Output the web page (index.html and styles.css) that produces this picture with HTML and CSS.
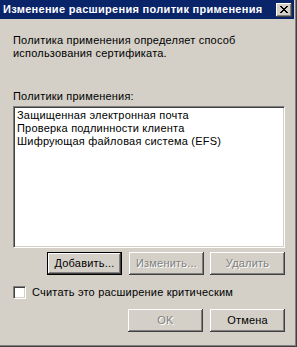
FILE: index.html
```html
<!DOCTYPE html>
<html lang="ru">
<head>
<meta charset="utf-8">
<link rel="stylesheet" href="styles.css">
</head>
<body>
<div class="window">
  <div class="titlebar">
    <span class="title">Изменение расширения политик применения</span>
    <span class="close">
      <svg width="8" height="7" viewBox="0 0 8 7" shape-rendering="crispEdges"><path fill="#000" d="M0 0h2v1H0zM6 0h2v1H6zM1 1h2v1H1zM5 1h2v1H5zM2 2h4v1H2zM3 3h2v1H3zM2 4h4v1H2zM1 5h2v1H1zM5 5h2v1H5zM0 6h2v1H0zM6 6h2v1H6z"/></svg>
    </span>
  </div>
  <div class="content">
    <p class="desc">Политика применения определяет способ<br>использования сертификата.</p>
    <p class="label">Политики применения:</p>
    <div class="list">
      <div class="item">Защищенная электронная почта</div>
      <div class="item">Проверка подлинности клиента</div>
      <div class="item">Шифрующая файловая система (EFS)</div>
    </div>
    <div class="btnrow">
      <span class="btn default">Добавить...</span>
      <span class="btn disabled">Изменить...</span>
      <span class="btn disabled">Удалить</span>
    </div>
    <label class="check"><span class="box"></span><span>Считать это расширение критическим</span></label>
    <div class="btnrow bottom">
      <span class="btn disabled">OK</span>
      <span class="btn">Отмена</span>
    </div>
  </div>
</div>
</body>
</html>
```

FILE: styles.css
```css
html, body {
  margin: 0;
  padding: 0;
  background: #d4d0c8;
}
body {
  font-family: "Liberation Sans", Arial, sans-serif;
  font-size: 11px;
  line-height: 13px;
  letter-spacing: 0.2px;
  color: #000;
}
.window {
  width: 297px;
  height: 347px;
  box-sizing: border-box;
  background: #d4d0c8;
  padding: 0 3px 3px 0;
  box-shadow: inset -1px -1px #404040, inset -2px -2px #808080;
  display: flex;
  flex-direction: column;
}
.titlebar {
  height: 19px;
  background: #0a246a;
  display: flex;
  align-items: center;
  justify-content: space-between;
  padding: 0 2px 0 3px;
}
.title {
  color: #fff;
  font-weight: bold;
  font-size: 11px;
  letter-spacing: 0.3px;
  white-space: nowrap;
}
.close {
  width: 16px;
  height: 14px;
  box-sizing: border-box;
  background: #d4d0c8;
  box-shadow: inset -1px -1px #404040, inset 1px 1px #fff, inset -2px -2px #808080;
  display: flex;
  align-items: center;
  justify-content: center;
}
.close svg { display: block; }
.content {
  padding: 0 9px 0 13px;
  display: flex;
  flex-direction: column;
}
.desc {
  margin: 15px 0 0;
}
.label {
  margin: 30px 0 0;
}
.list {
  margin-top: 3px;
  height: 142px;
  box-sizing: border-box;
  background: #fff;
  border-top: 1px solid #808080;
  border-left: 1px solid #808080;
  border-right: 1px solid #fff;
  border-bottom: 1px solid #fff;
  box-shadow: inset 1px 1px #404040, inset -1px -1px #d4d0c8;
  padding: 2px 3px;
}
.item {
  height: 13px;
  white-space: nowrap;
}
.btnrow {
  margin-top: 4px;
  display: flex;
  justify-content: flex-end;
  gap: 6px;
}
.btnrow.bottom {
  margin-top: 10px;
  gap: 7px;
}
.btn {
  width: 75px;
  height: 23px;
  box-sizing: border-box;
  background: #d4d0c8;
  box-shadow: inset -1px -1px #404040, inset 1px 1px #fff, inset -2px -2px #808080;
  display: flex;
  align-items: center;
  justify-content: center;
}
.btn.default {
  border: 1px solid #000;
  margin-right: 1px;
}
.btn.disabled {
  color: #808080;
  text-shadow: 1px 1px #fff;
}
.check {
  margin-top: 11px;
  display: flex;
  align-items: center;
  gap: 6px;
  height: 13px;
}
.box {
  width: 13px;
  height: 13px;
  box-sizing: border-box;
  background: #fff;
  border-top: 1px solid #808080;
  border-left: 1px solid #808080;
  border-right: 1px solid #fff;
  border-bottom: 1px solid #fff;
  box-shadow: inset 1px 1px #404040, inset -1px -1px #d4d0c8;
}
```
